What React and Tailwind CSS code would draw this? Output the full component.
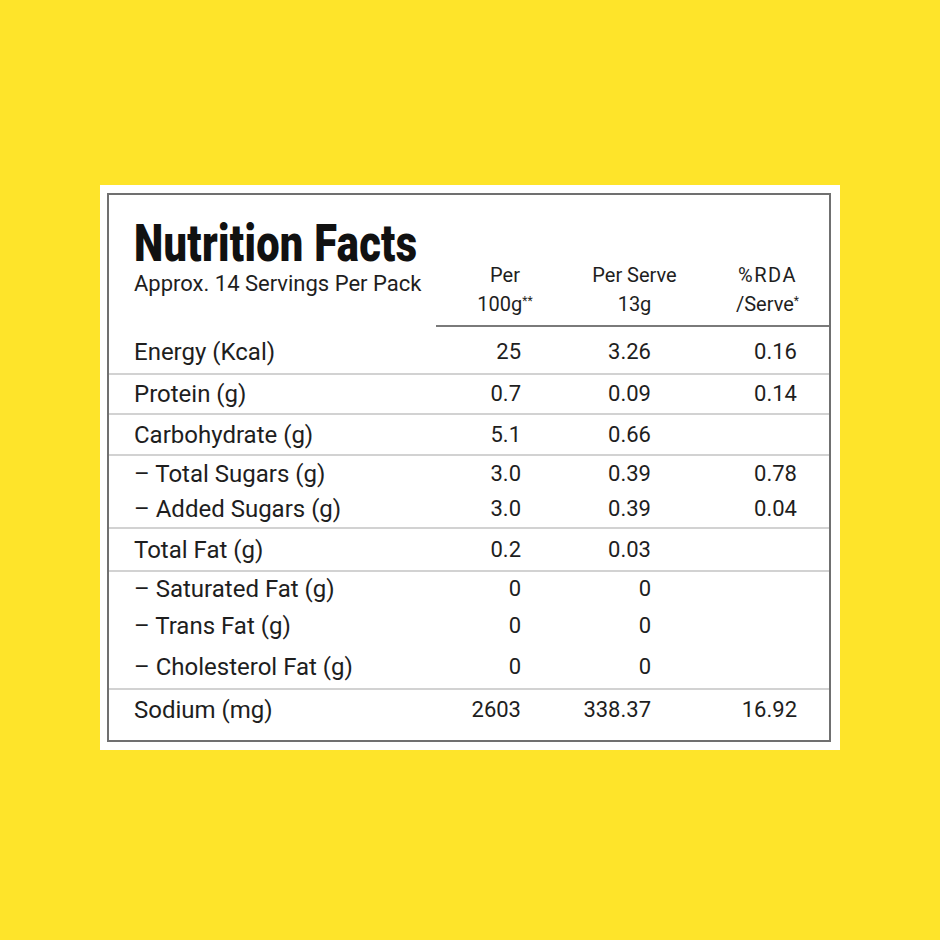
import React from "react";

const rows = [
  { label: "Energy (Kcal)", a: "25", b: "3.26", c: "0.16", h: "h-[48px] pt-[4px]", border: true },
  { label: "Protein (g)", a: "0.7", b: "0.09", c: "0.14", h: "h-[40px]", border: true },
  { label: "Carbohydrate (g)", a: "5.1", b: "0.66", c: "", h: "h-[41px]", border: true },
  { label: "– Total Sugars (g)", a: "3.0", b: "0.39", c: "0.78", h: "h-[35px]", border: false },
  { label: "– Added Sugars (g)", a: "3.0", b: "0.39", c: "0.04", h: "h-[38px]", border: true },
  { label: "Total Fat (g)", a: "0.2", b: "0.03", c: "", h: "h-[43px]", border: true },
  { label: "– Saturated Fat (g)", a: "0", b: "0", c: "", h: "h-[34px]", border: false },
  { label: "– Trans Fat (g)", a: "0", b: "0", c: "", h: "h-[40px]", border: false },
  { label: "– Cholesterol Fat (g)", a: "0", b: "0", c: "", h: "h-[44px]", border: true },
  { label: "Sodium (mg)", a: "2603", b: "338.37", c: "16.92", h: "h-[50px] pb-[10px]", border: false },
];

export default function App() {
  return (
    <div className="w-[940px] h-[940px] bg-[#fee42a] pt-[185px] pl-[100px] font-[family-name:Roboto,sans-serif] text-[#1e1e1e]">
      <div className="w-[740px] h-[565px] bg-white pt-[8px] pl-[7px]">
        <div className="w-[724px] h-[549px] border-2 border-[#707070] flex flex-col">
          {/* header */}
          <div className="h-[132px] flex">
            <div className="w-[327px] pl-[25px] pt-[26px]">
              <div className="text-[52px] leading-[46px] font-black text-[#111] whitespace-nowrap">
                <span className="inline-block scale-x-[0.8] origin-left tracking-[0.4px]">Nutrition Facts</span>
              </div>
              <div className="mt-[4px] text-[22px] leading-[26px] whitespace-nowrap">Approx. 14 Servings Per Pack</div>
            </div>
            <div className="self-end w-[393px] grid grid-cols-[130px_150px_113px] border-b-2 border-[#7a7a7a] pb-[6px] text-[20px] leading-[29px]">
              <div className="text-center pl-[8px]">
                <div>Per</div>
                <div>100g<sup className="text-[12px]">**</sup></div>
              </div>
              <div className="text-center pr-[13px]">
                <div>Per Serve</div>
                <div>13g</div>
              </div>
              <div className="text-center pr-[10px]">
                <div className="tracking-[1.5px]">%RDA</div>
                <div>/Serve<sup className="text-[12px]">*</sup></div>
              </div>
            </div>
          </div>
          {/* rows */}
          {rows.map((r, i) => (
            <div
              key={i}
              className={`grid grid-cols-[327px_130px_150px_113px] items-center ${r.h} ${r.border ? "border-b-2 border-[#d2d2d2]" : ""}`}
            >
              <div className="pl-[25px] text-[24px] leading-[30px] whitespace-nowrap">{r.label}</div>
              <div className="text-right pr-[45px] text-[22px] leading-[30px]">{r.a}</div>
              <div className="text-right pr-[65px] text-[22px] leading-[30px]">{r.b}</div>
              <div className="text-right pr-[32px] text-[22px] leading-[30px]">{r.c}</div>
            </div>
          ))}
        </div>
      </div>
    </div>
  );
}
